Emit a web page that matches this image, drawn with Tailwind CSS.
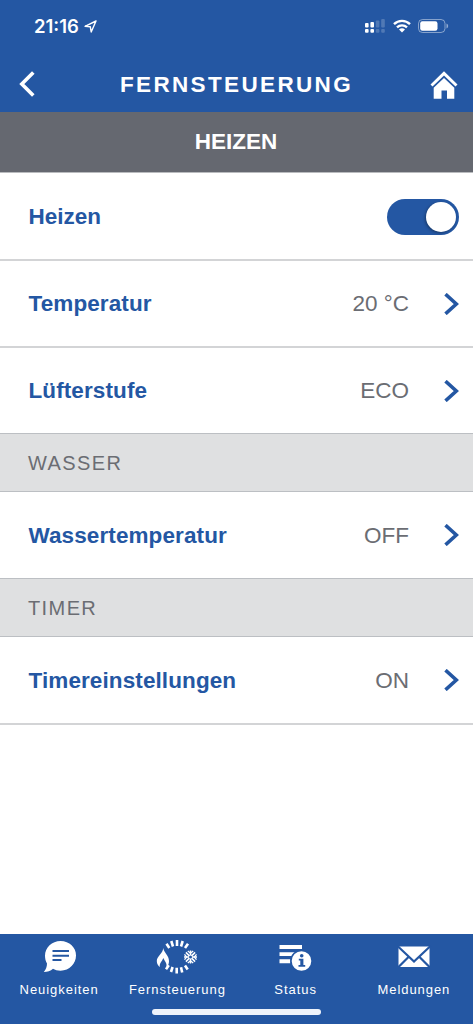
<!DOCTYPE html>
<html lang="de">
<head>
<meta charset="utf-8">
<title>Fernsteuerung</title>
<script src="https://cdn.jsdelivr.net/npm/@tailwindcss/browser@4"></script>
</head>
<body class="bg-white">
<div class="flex flex-col w-[473px] h-[1024px] overflow-hidden font-['Liberation_Sans',Arial,sans-serif] text-[22.5px] leading-none text-[#6b6d73]">
  <header class="flex flex-col h-[112px] shrink-0 bg-[#2457a3] text-white">
    <div class="flex items-center justify-between h-[52px] pl-[34px] pr-6">
      <div class="flex items-center gap-[5px] font-['Inter',sans-serif] font-semibold text-[18.5px] tracking-[0px]">
        <span class="pt-px">21:16</span>
        <svg width="13" height="13" viewBox="0 0 13 13" fill="none" stroke="currentColor" stroke-width="1.4" stroke-linejoin="round"><path d="M12 1 1 6.3 6.3 6.8 7.2 12Z"/></svg>
      </div>
      <div class="flex items-center">
        <svg width="20" height="16" viewBox="0 0 20 16" fill="currentColor"><rect x="0" y="5" width="3.6" height="4.5" rx="1"/><rect x="5.4" y="4" width="3.6" height="5.5" rx="1"/><rect x="0" y="11" width="3.6" height="3.8" rx="1"/><rect x="5.4" y="11" width="3.6" height="3.8" rx="1"/><g opacity=".2"><rect x="10.8" y="2.5" width="3.6" height="7" rx="1"/><rect x="16.2" y="1" width="3.6" height="8.5" rx="1"/><rect x="10.8" y="11" width="3.6" height="3.8" rx="1"/><rect x="16.2" y="11" width="3.6" height="3.8" rx="1"/></g></svg>
        <svg class="ml-2" width="18" height="14" viewBox="0 0 18 14" fill="none" stroke="currentColor" stroke-width="2.4"><path d="M1 5.1a11.6 11.6 0 0 1 16 0M4 8.4a7.3 7.3 0 0 1 10 0"/><path d="M9 13.4 6 10.6a4.3 4.3 0 0 1 6 0Z" fill="currentColor" stroke="none"/></svg>
        <svg class="ml-[7px]" width="31" height="14" viewBox="0 0 31 14" fill="currentColor"><rect x=".5" y=".5" width="26.5" height="13" rx="4" fill="none" stroke="currentColor" opacity=".45"/><rect x="2.2" y="2.2" width="17.3" height="9.6" rx="2.2"/><path d="M28.500 4.500c2.200.8 2.200 4.200 0 5Z" opacity=".5"/></svg>
      </div>
    </div>
    <div class="flex items-center justify-between h-[60px] pl-[19px] pr-[15px]">
      <svg class="mt-1" width="17" height="26" viewBox="0 0 17 26" fill="none" stroke="currentColor" stroke-width="3.6"><path d="M14.3 1.4 2.8 13l11.5 11.6"/></svg>
      <h1 class="font-bold tracking-[2.35px] mt-1.5 ml-[7px]">FERNSTEUERUNG</h1>
      <svg class="mt-[5px]" width="28" height="28" viewBox="0 0 28 28" fill="currentColor"><path d="M14 .3 27.5 13.4 25.5 15.6 14 4.6 2.500 15.6.5 13.4Z"/><path d="M14 7 24.3 16.7V27.7H17V19.5H11.5V27.7H3.700V16.7Z"/></svg>
    </div>
  </header>
  <h2 class="flex items-center justify-center h-[61px] shrink-0 bg-[#656870] border-b border-[#b9bbbe] text-white font-bold pt-[1px] pr-[1px]">HEIZEN</h2>
  <main class="flex flex-col grow">
    <div class="flex items-center justify-between h-[88px] pl-[28.500px] pr-[14px] border-b-2 border-[#d3d4d6]">
      <span class="font-bold text-[#2457a3] pt-[2px]">Heizen</span>
      <span class="flex items-center justify-end w-[72px] h-[36px] mt-[2px] pr-[3px] rounded-full bg-[#2457a3]"><span class="size-[30px] rounded-full bg-white shadow-[-1px_1px_3px_rgba(0,0,0,0.35)]"></span></span>
    </div>
    <div class="flex items-center h-[87px] pl-[28.500px] pr-[14px] border-b-2 border-[#d3d4d6]">
      <span class="font-bold text-[#2457a3] tracking-[0.1px] grow pt-[2px]">Temperatur</span><span class="pt-[2px]">20 °C</span>
      <svg class="ml-[35px]" width="15" height="22" viewBox="0 0 15 22" fill="none" stroke="#2457a3" stroke-width="3.6"><path d="M1.500 1.200 12.300 11 1.500 20.800"/></svg>
    </div>
    <div class="flex items-center h-[85px] pl-[28.500px] pr-[14px]">
      <span class="font-bold text-[#2457a3] tracking-[0.1px] grow pt-[2px]">Lüfterstufe</span><span class="pt-[2px]">ECO</span>
      <svg class="ml-[35px]" width="15" height="22" viewBox="0 0 15 22" fill="none" stroke="#2457a3" stroke-width="3.6"><path d="M1.500 1.200 12.300 11 1.500 20.800"/></svg>
    </div>
    <h3 class="flex items-center h-[59px] pl-[28px] bg-[#dfe0e1] border-t border-b border-[#bcbfc3] text-[20px] tracking-[1.4px]">WASSER</h3>
    <div class="flex items-center h-[86px] pl-[28.500px] pr-[14px]">
      <span class="font-bold text-[#2457a3] tracking-[0.1px] grow pt-[2px]">Wassertemperatur</span><span class="pt-[2px]">OFF</span>
      <svg class="ml-[35px]" width="15" height="22" viewBox="0 0 15 22" fill="none" stroke="#2457a3" stroke-width="3.6"><path d="M1.500 1.200 12.300 11 1.500 20.800"/></svg>
    </div>
    <h3 class="flex items-center h-[59px] pl-[28px] bg-[#dfe0e1] border-t border-b border-[#bcbfc3] text-[20px] tracking-[1.4px]">TIMER</h3>
    <div class="flex items-center h-[88px] pl-[28.500px] pr-[14px] border-b-2 border-[#d3d4d6]">
      <span class="font-bold text-[#2457a3] tracking-[0.1px] grow pt-[2px]">Timereinstellungen</span><span class="pt-[2px]">ON</span>
      <svg class="ml-[35px]" width="15" height="22" viewBox="0 0 15 22" fill="none" stroke="#2457a3" stroke-width="3.6"><path d="M1.500 1.200 12.300 11 1.500 20.800"/></svg>
    </div>
  </main>
  <footer class="flex flex-col items-center h-[90px] shrink-0 bg-[#2457a3] text-white text-[13px] tracking-[0.95px]">
    <nav class="grid grid-cols-4 w-full h-[75px] pt-[5px]">
      <a class="flex flex-col items-center gap-2">
        <svg width="36" height="36" viewBox="-1 0 36 36" fill="currentColor"><path d="M18.500 2C27.500 2 34 8.500 34 16.500S27.500 31.700 18.500 31.700C15.500 31.700 13 31 11 29.800 8.500 32 5.500 33 1.800 33 4 30.600 5 27.800 5 24.600 3.700 22.300 3 19.700 3 16.800 3 8.500 10 2 18.500 2Z"/><path d="M10.500 12H27M10.500 16.700H27M10.500 21H19.500" stroke="#2457a3" stroke-width="2"/></svg>
        <span>Neuigkeiten</span>
      </a>
      <a class="flex flex-col items-center gap-2">
        <svg width="44" height="36" viewBox="0 0 44 36" fill="none" stroke="currentColor">
          <g stroke-width="2.600"><path d="M11.500 4.800 14.300 9M16.300 2 18 7.500M22 1V7M27.700 2 26 7.500M33 4.800 30 9M11 30.200 13.800 26.200M16 33 17.600 28M21.700 34.500V28.800M27.200 33.500 26 28.300M32.700 30.500 30 26.500"/></g>
          <path fill="currentColor" stroke="none" d="M8.200 9C9 13.500 14 16.500 14 22 14 25 13 26.800 11.300 28 12.300 24.500 10 22.500 8.300 19 7 22.500 4 24.500 5 28 3 26.800 1.800 24.800 1.800 22 1.800 17 8 14.500 8.200 9Z"/>
          <g stroke-width="1.500"><path d="M35.500 11.500V24.500M29 18H42M30.900 13.400 40.100 22.600M40.100 13.400 30.900 22.600"/><path stroke-width="1.300" d="M32.800 12 35.500 14.200 38.200 12M32.800 24 35.500 21.800 38.200 24M29.500 15.300 31.700 18 29.500 20.700M41.500 15.300 39.300 18 41.500 20.700"/></g><circle cx="35.500" cy="18" r="1.500" fill="#2457a3" stroke="none"/>
        </svg>
        <span>Fernsteuerung</span>
      </a>
      <a class="flex flex-col items-center gap-2">
        <svg width="36" height="36" viewBox="1 0 36 36" fill="currentColor"><path d="M2.500 6H25V10H2.500ZM2.500 13.200H18.500L15 17H2.500ZM2.500 20.200H13.500V24.300H2.500Z"/><circle cx="24.500" cy="22" r="10.600" stroke="#2457a3" stroke-width="1.600"/><g fill="#2457a3"><circle cx="24.700" cy="16.800" r="1.800"/><path d="M21.800 19.700H26.400V26H28.200V27.800H21.500V26H23.300V21.500H21.800Z"/></g></svg>
        <span>Status</span>
      </a>
      <a class="flex flex-col items-center gap-2">
        <svg width="36" height="36" viewBox="0 0 36 36" fill="currentColor"><path d="M2.500 7.500H33.500V28H2.500Z"/><path d="M1.500 7 18 22.500 34.500 7M2 28.500 13 17.500M34 28.500 23 17.500" fill="none" stroke="#2457a3" stroke-width="2.200"/></svg>
        <span>Meldungen</span>
      </a>
    </nav>
    <div class="w-[169px] h-[6px] rounded-full bg-[#eef3fb]"></div>
  </footer>
</div>
</body>
</html>
